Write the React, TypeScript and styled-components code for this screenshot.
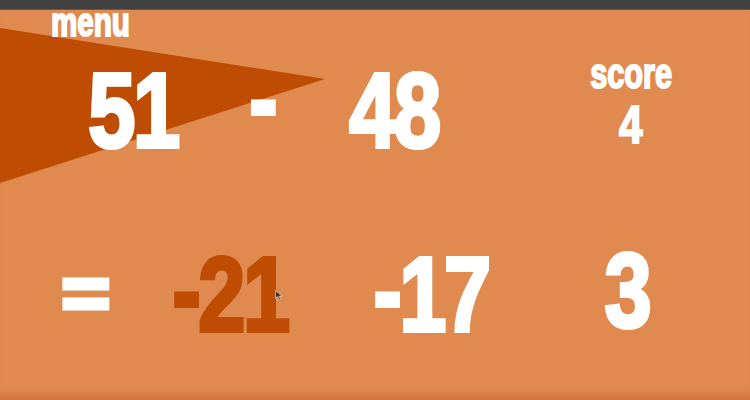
import React from "react";
import styled, { createGlobalStyle, css } from "styled-components";

const ORANGE = "#E08A50";
const DARK = "#BE4D03";
const WHITE = "#FFFFFF";

const GlobalStyle = createGlobalStyle`
  html, body { margin: 0; padding: 0; background: ${ORANGE}; }
  body { font-family: "Liberation Sans", Arial, sans-serif; }
`;

const Page = styled.div`
  position: relative;
  isolation: isolate;
  width: 750px;
  height: 400px;
  overflow: hidden;
  background: ${ORANGE};
  display: flex;
  flex-direction: column;
  box-shadow: inset 0 -12px 10px -8px rgba(170, 75, 25, 0.45);
`;

const TopBar = styled.div`
  height: 10px;
  flex: none;
  background: #414141;
  border-bottom: 1px solid #6a5548;
  box-sizing: border-box;
`;

const Backdrop = styled.svg`
  position: absolute;
  inset: 0;
  z-index: -1;
`;

const Cursor = styled.svg`
  position: absolute;
  left: 275px;
  top: 290px;
`;

const heavy = css`
  display: inline-block;
  font-family: "Liberation Sans", Arial, sans-serif;
  font-weight: 700;
  white-space: nowrap;
  paint-order: stroke fill;
`;

const HeaderRow = styled.div`
  height: 26px;
  padding-left: 51px;
  display: flex;
  align-items: flex-start;
`;

const MenuLabel = styled.span`
  ${heavy};
  font-size: 40px;
  line-height: 26px;
  margin-top: -1px;
  color: ${WHITE};
  -webkit-text-stroke: 2px ${WHITE};
  transform: scaleX(0.74);
  transform-origin: left center;
`;

const Row = styled.div<{ $cols: string; $mt: number }>`
  display: grid;
  grid-template-columns: ${(p) => p.$cols};
  align-items: start;
  margin-top: ${(p) => p.$mt}px;
`;

const Cell = styled.div<{ $col: number }>`
  grid-column: ${(p) => p.$col};
  grid-row: 1;
  display: flex;
  flex-direction: column;
  align-items: center;
`;

const BigNumber = styled.span<{ $dark?: boolean }>`
  ${heavy};
  font-size: 106px;
  line-height: 117px;
  letter-spacing: -3px;
  color: ${(p) => (p.$dark ? DARK : WHITE)};
  -webkit-text-stroke: 4px ${(p) => (p.$dark ? DARK : WHITE)};
  transform: scaleX(0.8);
`;

const MinusOp = styled(BigNumber)`
  line-height: 93px;
`;

const Sign = styled.span`
  vertical-align: 4px;
`;

const EqualsOp = styled.span`
  ${heavy};
  font-size: 75px;
  line-height: 117px;
  margin-top: 3px;
  color: ${WHITE};
  -webkit-text-stroke: 5px ${WHITE};
  transform: scaleX(1.1);
`;

const ScoreLabel = styled.span`
  ${heavy};
  font-size: 42px;
  line-height: 43px;
  color: ${WHITE};
  -webkit-text-stroke: 2px ${WHITE};
  transform: scaleX(0.73);
`;

const ScoreValue = styled.span`
  ${heavy};
  font-size: 53px;
  line-height: 60px;
  color: ${WHITE};
  -webkit-text-stroke: 2px ${WHITE};
  transform: scaleX(0.8);
`;

export default function App() {
  return (
    <>
      <GlobalStyle />
      <Page>
        <Backdrop width="750" height="400" viewBox="0 0 750 400">
          <polygon points="0,28 325,79 0,183" fill={DARK} />
        </Backdrop>
        <TopBar />
        <HeaderRow>
          <MenuLabel>menu</MenuLabel>
        </HeaderRow>
        <Row $cols="73px 120px 138px 126px 124px 100px" $mt={16}>
          <Cell $col={2}>
            <BigNumber>51</BigNumber>
          </Cell>
          <Cell $col={3}>
            <MinusOp>-</MinusOp>
          </Cell>
          <Cell $col={4}>
            <BigNumber>48</BigNumber>
          </Cell>
          <Cell $col={6}>
            <ScoreLabel>score</ScoreLabel>
            <ScoreValue>4</ScoreValue>
          </Cell>
        </Row>
        <Row $cols="36px 100px 34px 120px 81px 120px 86px 100px" $mt={63}>
          <Cell $col={2}>
            <EqualsOp>=</EqualsOp>
          </Cell>
          <Cell $col={4}>
            <BigNumber $dark>
              <Sign>-</Sign>21
            </BigNumber>
          </Cell>
          <Cell $col={6}>
            <BigNumber>
              <Sign>-</Sign>17
            </BigNumber>
          </Cell>
          <Cell $col={8}>
            <BigNumber>3</BigNumber>
          </Cell>
        </Row>
        <Cursor width="9" height="11" viewBox="0 0 9 11">
          <path d="M0.5 0.5 L0.5 8.5 L2.6 6.6 L4.2 10 L5.6 9.3 L4.1 6.1 L7 6.1 Z" fill="#333" stroke="#eee" strokeWidth="0.6" />
        </Cursor>
      </Page>
    </>
  );
}
